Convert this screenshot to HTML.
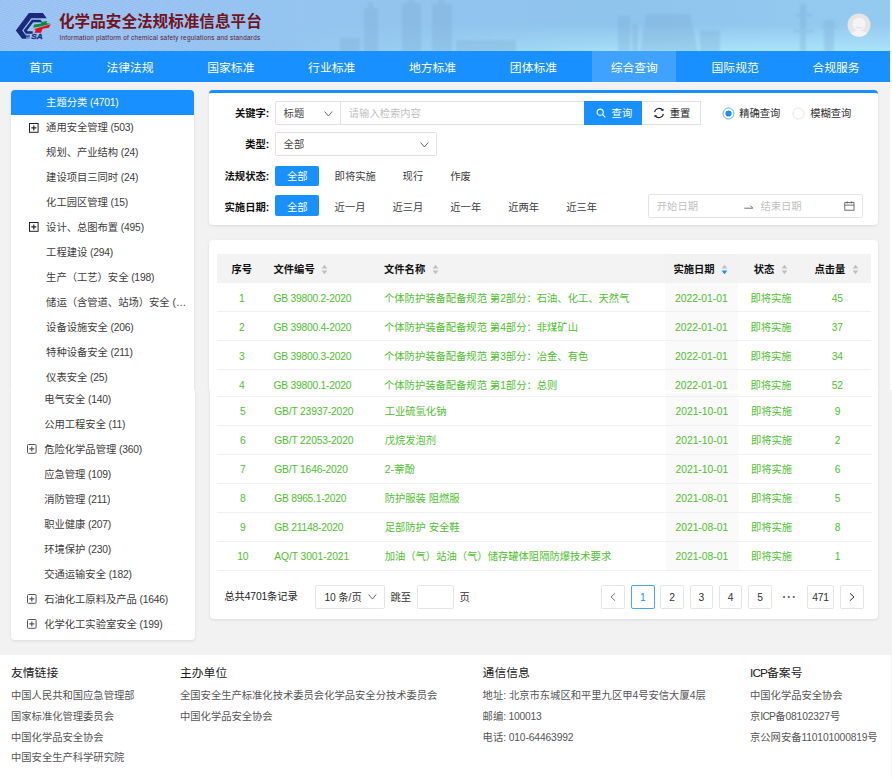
<!DOCTYPE html><html lang="zh-CN"><head><meta charset="utf-8"><title>化学品安全法规标准信息平台</title><style>
html,body{margin:0;padding:0;}
body{width:892px;height:778px;overflow:hidden;background:#f2f2f2;font-family:"Liberation Sans","Noto Sans CJK SC",sans-serif;position:relative;}
.t{position:absolute;white-space:nowrap;margin:0;padding:0;}
.r{position:absolute;box-sizing:border-box;}
svg{position:absolute;overflow:visible;}
</style></head><body>
<div class="r" style="left:0;top:0;width:892px;height:52px;background:linear-gradient(90deg,#a3cbf6 0%,#9fc9f4 18%,#95c5f0 32%,#92c4ee 45%,#8fc4ed 70%,#95caf0 100%);overflow:hidden;">
<div class="r" style="left:0;top:0;width:892px;height:52px;background:linear-gradient(180deg,rgba(160,210,245,0) 0%,rgba(168,222,248,0) 45%,rgba(176,232,250,0.85) 100%);-webkit-mask-image:linear-gradient(90deg,transparent 0%,transparent 30%,#000 75%,#000 100%);"></div>
<div class="r" style="left:0;top:0;width:300px;height:52px;background:repeating-linear-gradient(17deg,rgba(30,80,200,0) 0px,rgba(30,80,200,0.11) 1.05px,rgba(30,80,200,0) 2.1px);-webkit-mask-image:linear-gradient(90deg,#000 0%,#000 45%,transparent 100%);"></div>
<svg width="892" height="52" viewBox="0 0 892 52" style="left:0;top:0">
<defs><filter id="bl" x="-5%" y="-20%" width="110%" height="140%"><feGaussianBlur stdDeviation="1.1"/></filter></defs>
<g fill="#7aa9d3" opacity="0.30" filter="url(#bl)">
<rect x="364" y="8" width="14" height="44"/><rect x="368" y="2" width="5" height="8"/>
<rect x="402" y="3" width="19" height="49"/><rect x="408" y="0" width="6" height="4"/>
<rect x="432" y="4" width="20" height="48"/><rect x="438" y="0" width="7" height="5"/>
<rect x="340" y="38" width="20" height="14"/><rect x="456" y="40" width="60" height="12"/>
<path d="M640 52 L646 14 L690 14 L698 52 Z"/><rect x="618" y="16" width="12" height="36"/><rect x="632" y="24" width="6" height="28"/>
<rect x="700" y="30" width="20" height="22"/>
<rect x="800" y="4" width="6" height="48"/><rect x="796" y="14" width="16" height="2.5"/><rect x="794" y="30" width="20" height="2.5"/>
<rect x="824" y="20" width="10" height="32"/><rect x="820" y="26" width="18" height="2"/>
</g>
</svg>
</div>
<svg width="60" height="50" viewBox="0 0 60 50" style="left:0;top:0"><path d="M28.84 13.10 L42.94 13.10 L46.71 18.27 L31.31 18.27 L22.16 30.49 L25.18 34.53 L26.15 35.87 L26.15 38.67 L22.11 38.67 L15.81 30.49 Z" fill="#1b2a78"/><path d="M31.85 19.67 L40.46 19.67 L42.19 22.25 L33.25 22.25 L27.01 30.49 L27.55 31.19 L32.71 31.19 L32.71 33.66 L25.93 33.66 L23.56 30.49 Z" fill="#1b2a78"/><path d="M25.93 34.85 L29.81 34.85 L29.81 35.66 L25.93 35.66 Z" fill="#1b2a78" opacity="0.85"/><path d="M25.93 36.19 L29.81 36.19 L29.81 37.00 L25.93 37.00 Z" fill="#1b2a78" opacity="0.85"/><path d="M25.93 37.54 L29.81 37.54 L29.81 38.35 L25.93 38.35 Z" fill="#1b2a78" opacity="0.85"/><path d="M41.38 21.93 L47.24 21.07 L46.49 23.33 L50.47 23.87 L44.45 25.38 L39.33 26.72 L33.14 27.64 L34.22 24.62 L40.79 23.65 Z" fill="#0f8a3a"/><path d="M34.54 29.04 L42.29 26.67 L50.69 24.30 L48.86 27.85 L42.62 28.71 L41.00 32.70 L34.43 32.70 L36.16 29.57 L34.76 29.90 Z" fill="#e60a1c"/><text x="0" y="0" transform="translate(31.3 38.7) scale(1.13 1)" font-family='"Liberation Sans",sans-serif' font-size="7.3" stroke="#1b2a78" stroke-width="0.25" font-weight="700" font-style="italic" fill="#1b2a78">SA</text></svg>
<div class="t" style="top:11px;line-height:22px;font-size:15.6px;color:#75121d;font-weight:700;left:59.00px;">化学品安全法规标准信息平台</div>
<div class="t" style="top:33px;line-height:10px;font-size:6.4px;color:#5e2032;letter-spacing:0.245px;left:59.40px;">Information platform of chemical safety regulations and standards</div>
<svg width="24" height="24" viewBox="0 0 24 24" style="left:846.6px;top:13px">
<defs><clipPath id="avc"><circle cx="12" cy="12" r="11.5"/></clipPath></defs>
<circle cx="12" cy="12" r="11.5" fill="#e5e5e5"/>
<g clip-path="url(#avc)"><ellipse cx="12" cy="25" rx="10" ry="7.6" fill="#f4f4f4"/>
<circle cx="12" cy="11.2" r="6.5" fill="#f4f4f4"/>
<path d="M7.4 13.4 Q12 17.4 16.6 13.4 Q12 15.0 7.4 13.4Z" fill="#e1e1e1"/></g>
</svg>
<div class="r" style="left:0.00px;top:51.00px;width:892.00px;height:31.00px;background:#1890ff;"></div>
<div class="r" style="left:592.30px;top:51.00px;width:83.40px;height:31.00px;background:#3fa2ff;"></div>
<div class="t" style="top:58px;line-height:20px;font-size:11.8px;color:#fff;left:-159.00px;width:400px;text-align:center;">首页</div>
<div class="t" style="top:58px;line-height:20px;font-size:11.8px;color:#fff;left:-70.00px;width:400px;text-align:center;">法律法规</div>
<div class="t" style="top:58px;line-height:20px;font-size:11.8px;color:#fff;left:30.86px;width:400px;text-align:center;">国家标准</div>
<div class="t" style="top:58px;line-height:20px;font-size:11.8px;color:#fff;left:131.72px;width:400px;text-align:center;">行业标准</div>
<div class="t" style="top:58px;line-height:20px;font-size:11.8px;color:#fff;left:232.58px;width:400px;text-align:center;">地方标准</div>
<div class="t" style="top:58px;line-height:20px;font-size:11.8px;color:#fff;left:333.44px;width:400px;text-align:center;">团体标准</div>
<div class="t" style="top:58px;line-height:20px;font-size:11.8px;color:#fff;left:434.30px;width:400px;text-align:center;">综合查询</div>
<div class="t" style="top:58px;line-height:20px;font-size:11.8px;color:#fff;left:535.16px;width:400px;text-align:center;">国际规范</div>
<div class="t" style="top:58px;line-height:20px;font-size:11.8px;color:#fff;left:636.02px;width:400px;text-align:center;">合规服务</div>
<div class="r" style="left:11.00px;top:90.00px;width:183.00px;height:300.00px;background:#fff;border-radius:4px 4px 0 0;box-shadow:0 1px 3px rgba(0,0,0,0.10);clip-path:inset(-4px -4px 0 -4px);"></div>
<div class="r" style="left:11.20px;top:390.00px;width:183.80px;height:250.00px;background:#fff;border-radius:0 0 4px 4px;box-shadow:0 1px 3px rgba(0,0,0,0.10);clip-path:inset(0 -4px -5px -4px);"></div>
<div class="r" style="left:11.00px;top:90.00px;width:183.00px;height:25.00px;background:#1890ff;border-radius:4px 4px 0 0;"></div>
<div class="t" style="top:93px;line-height:20px;font-size:10.3px;color:#fff;left:46.10px;">主题分类<span style="letter-spacing:-0.198px"> (4701)</span></div>
<div class="t" style="top:118px;line-height:20px;font-size:10.3px;color:#3c3c3c;left:46.10px;">通用安全管理<span style="letter-spacing:-0.202px"> (503)</span></div>
<svg width="10" height="10" viewBox="0 0 10 10" style="left:28.80px;top:122.60px"><rect x="0.5" y="0.5" width="8.6" height="8.8" rx="0" fill="#fff" stroke="#222" stroke-width="1"/><path d="M2.3 4.9H7.3M4.8 2.4V7.4" stroke="#222" stroke-width="1.15" fill="none"/></svg>
<div class="t" style="top:143px;line-height:20px;font-size:10.3px;color:#3c3c3c;left:46.10px;">规划、产业结构<span style="letter-spacing:-0.207px"> (24)</span></div>
<div class="t" style="top:168px;line-height:20px;font-size:10.3px;color:#3c3c3c;left:46.10px;">建设项目三同时<span style="letter-spacing:-0.207px"> (24)</span></div>
<div class="t" style="top:193px;line-height:20px;font-size:10.3px;color:#3c3c3c;left:46.10px;">化工园区管理<span style="letter-spacing:-0.207px"> (15)</span></div>
<div class="t" style="top:218px;line-height:20px;font-size:10.3px;color:#3c3c3c;left:46.10px;">设计、总图布置<span style="letter-spacing:-0.202px"> (495)</span></div>
<svg width="10" height="10" viewBox="0 0 10 10" style="left:28.80px;top:222.48px"><rect x="0.5" y="0.5" width="8.6" height="8.8" rx="0" fill="#fff" stroke="#222" stroke-width="1"/><path d="M2.3 4.9H7.3M4.8 2.4V7.4" stroke="#222" stroke-width="1.15" fill="none"/></svg>
<div class="t" style="top:243px;line-height:20px;font-size:10.3px;color:#3c3c3c;left:46.10px;">工程建设<span style="letter-spacing:-0.202px"> (294)</span></div>
<div class="t" style="top:268px;line-height:20px;font-size:10.3px;color:#3c3c3c;left:46.10px;">生产（工艺）安全<span style="letter-spacing:-0.202px"> (198)</span></div>
<div class="t" style="top:293px;line-height:20px;font-size:10.3px;color:#3c3c3c;left:46.10px;">储运（含管道、站场）安全 (…</div>
<div class="t" style="top:318px;line-height:20px;font-size:10.3px;color:#3c3c3c;left:46.10px;">设备设施安全<span style="letter-spacing:-0.202px"> (206)</span></div>
<div class="t" style="top:343px;line-height:20px;font-size:10.3px;color:#3c3c3c;left:46.10px;">特种设备安全<span style="letter-spacing:-0.202px"> (211)</span></div>
<div class="t" style="top:368px;line-height:20px;font-size:10.3px;color:#3c3c3c;left:46.10px;">仪表安全<span style="letter-spacing:-0.207px"> (25)</span></div>
<div class="t" style="top:390px;line-height:20px;font-size:10.3px;color:#3c3c3c;left:44.20px;">电气安全<span style="letter-spacing:-0.202px"> (140)</span></div>
<div class="t" style="top:415px;line-height:20px;font-size:10.3px;color:#3c3c3c;left:44.20px;">公用工程安全<span style="letter-spacing:-0.207px"> (11)</span></div>
<div class="t" style="top:440px;line-height:20px;font-size:10.3px;color:#3c3c3c;left:44.20px;">危险化学品管理<span style="letter-spacing:-0.202px"> (360)</span></div>
<svg width="10" height="10" viewBox="0 0 10 10" style="left:27.00px;top:444.40px"><rect x="0.5" y="0.5" width="8.6" height="8.8" rx="1" fill="#fff" stroke="#555" stroke-width="1"/><path d="M2.3 4.9H7.3M4.8 2.4V7.4" stroke="#555" stroke-width="1.15" fill="none"/></svg>
<div class="t" style="top:465px;line-height:20px;font-size:10.3px;color:#3c3c3c;left:44.20px;">应急管理<span style="letter-spacing:-0.202px"> (109)</span></div>
<div class="t" style="top:490px;line-height:20px;font-size:10.3px;color:#3c3c3c;left:44.20px;">消防管理<span style="letter-spacing:-0.202px"> (211)</span></div>
<div class="t" style="top:515px;line-height:20px;font-size:10.3px;color:#3c3c3c;left:44.20px;">职业健康<span style="letter-spacing:-0.202px"> (207)</span></div>
<div class="t" style="top:540px;line-height:20px;font-size:10.3px;color:#3c3c3c;left:44.20px;">环境保护<span style="letter-spacing:-0.202px"> (230)</span></div>
<div class="t" style="top:565px;line-height:20px;font-size:10.3px;color:#3c3c3c;left:44.20px;">交通运输安全<span style="letter-spacing:-0.202px"> (182)</span></div>
<div class="t" style="top:590px;line-height:20px;font-size:10.3px;color:#3c3c3c;left:44.20px;">石油化工原料及产品<span style="letter-spacing:-0.198px"> (1646)</span></div>
<svg width="10" height="10" viewBox="0 0 10 10" style="left:27.00px;top:594.40px"><rect x="0.5" y="0.5" width="8.6" height="8.8" rx="1" fill="#fff" stroke="#555" stroke-width="1"/><path d="M2.3 4.9H7.3M4.8 2.4V7.4" stroke="#555" stroke-width="1.15" fill="none"/></svg>
<div class="t" style="top:615px;line-height:20px;font-size:10.3px;color:#3c3c3c;left:44.20px;">化学化工实验室安全<span style="letter-spacing:-0.202px"> (199)</span></div>
<svg width="10" height="10" viewBox="0 0 10 10" style="left:27.00px;top:619.40px"><rect x="0.5" y="0.5" width="8.6" height="8.8" rx="1" fill="#fff" stroke="#555" stroke-width="1"/><path d="M2.3 4.9H7.3M4.8 2.4V7.4" stroke="#555" stroke-width="1.15" fill="none"/></svg>
<div class="r" style="left:209.30px;top:90.00px;width:668.50px;height:134.70px;background:#fff;border-top:3px solid #1890ff;border-radius:4px;box-shadow:0 1px 3px rgba(0,0,0,0.10);"></div>
<div class="t" style="top:104px;line-height:20px;font-size:10.3px;color:#111;font-weight:700;left:-130.80px;width:400px;text-align:right;">关键字:</div>
<div class="t" style="top:135px;line-height:20px;font-size:10.3px;color:#111;font-weight:700;left:-130.80px;width:400px;text-align:right;">类型:</div>
<div class="t" style="top:167px;line-height:20px;font-size:10.3px;color:#111;font-weight:700;left:-130.80px;width:400px;text-align:right;">法规状态:</div>
<div class="t" style="top:198px;line-height:20px;font-size:10.3px;color:#111;font-weight:700;left:-130.80px;width:400px;text-align:right;">实施日期:</div>
<div class="r" style="left:275.00px;top:101.00px;width:310.00px;height:24.00px;background:#fff;border:1px solid #e1e1e1;border-radius:2px 0 0 2px;"></div>
<div class="r" style="left:340.00px;top:101.00px;width:1.00px;height:24.00px;background:#e1e1e1;"></div>
<div class="t" style="top:104px;line-height:20px;font-size:10.3px;color:#444;left:283.60px;">标题</div>
<svg width="9" height="6" viewBox="0 0 9 6" style="left:323.90px;top:110.50px"><path d="M0.6 0.5L4.4 5.0L8.2 0.5" stroke="#6a6a6a" stroke-width="1" fill="none"/></svg>
<div class="t" style="top:104px;line-height:20px;font-size:10.3px;color:#bfbfbf;left:348.80px;">请输入检索内容</div>
<div class="r" style="left:584.00px;top:101.00px;width:58.00px;height:24.00px;background:#1890ff;"></div>
<svg width="11" height="11" viewBox="0 0 11 11" style="left:595.6px;top:107.6px"><circle cx="4.2" cy="4.2" r="3.1" stroke="#fff" stroke-width="1.1" fill="none"/><path d="M6.5 6.5L9.4 9.4" stroke="#fff" stroke-width="1.2" fill="none"/></svg>
<div class="t" style="top:104px;line-height:20px;font-size:10.3px;color:#fff;left:611.60px;">查询</div>
<div class="r" style="left:642.00px;top:101.00px;width:59.00px;height:24.00px;background:#fff;border:1px solid #e1e1e1;border-left:none;"></div>
<svg width="12" height="12" viewBox="0 0 12 12" style="left:652.8px;top:107.0px"><path d="M9.9 3.4A4.6 4.6 0 0 0 1.6 5.2M2.1 8.6A4.6 4.6 0 0 0 10.4 6.8" stroke="#222" stroke-width="1.05" fill="none"/><path d="M10.6 1.6L10.3 4.1L7.9 3.6Z M1.4 10.4L1.7 7.9L4.1 8.4Z" fill="#222"/></svg>
<div class="t" style="top:104px;line-height:20px;font-size:10.3px;color:#222;left:669.80px;">重置</div>
<svg width="13" height="13" viewBox="0 0 13 13" style="left:721.6px;top:107.0px"><circle cx="6.5" cy="6.5" r="5.5" fill="#fff" stroke="#3a9dff" stroke-width="0.8"/><circle cx="6.5" cy="6.5" r="3.1" fill="#1890ff"/></svg>
<div class="t" style="top:104px;line-height:20px;font-size:10.3px;color:#333;left:739.20px;">精确查询</div>
<svg width="13" height="13" viewBox="0 0 13 13" style="left:791.7px;top:107.0px"><circle cx="6.5" cy="6.5" r="5.5" fill="#fff" stroke="#dcdcdc" stroke-width="0.8"/></svg>
<div class="t" style="top:104px;line-height:20px;font-size:10.3px;color:#333;left:810.20px;">模糊查询</div>
<div class="r" style="left:275.00px;top:132.00px;width:162.00px;height:24.00px;background:#fff;border:1px solid #e1e1e1;border-radius:2px;"></div>
<div class="t" style="top:135px;line-height:20px;font-size:10.3px;color:#444;left:283.60px;">全部</div>
<svg width="9" height="6" viewBox="0 0 9 6" style="left:419.80px;top:141.50px"><path d="M0.6 0.5L4.4 5.0L8.2 0.5" stroke="#6a6a6a" stroke-width="1" fill="none"/></svg>
<div class="r" style="left:275.20px;top:165.50px;width:44.10px;height:20.60px;background:#1890ff;border-radius:2px;"></div>
<div class="t" style="top:167px;line-height:20px;font-size:10.3px;color:#fff;left:97.20px;width:400px;text-align:center;">全部</div>
<div class="t" style="top:167px;line-height:20px;font-size:10.3px;color:#3c3c3c;left:334.60px;">即将实施</div>
<div class="t" style="top:167px;line-height:20px;font-size:10.3px;color:#3c3c3c;left:402.60px;">现行</div>
<div class="t" style="top:167px;line-height:20px;font-size:10.3px;color:#3c3c3c;left:450.30px;">作废</div>
<div class="r" style="left:275.20px;top:195.40px;width:44.10px;height:20.60px;background:#1890ff;border-radius:2px;"></div>
<div class="t" style="top:198px;line-height:20px;font-size:10.3px;color:#fff;left:97.20px;width:400px;text-align:center;">全部</div>
<div class="t" style="top:198px;line-height:20px;font-size:10.3px;color:#3c3c3c;left:334.60px;">近一月</div>
<div class="t" style="top:198px;line-height:20px;font-size:10.3px;color:#3c3c3c;left:392.40px;">近三月</div>
<div class="t" style="top:198px;line-height:20px;font-size:10.3px;color:#3c3c3c;left:450.30px;">近一年</div>
<div class="t" style="top:198px;line-height:20px;font-size:10.3px;color:#3c3c3c;left:508.20px;">近两年</div>
<div class="t" style="top:198px;line-height:20px;font-size:10.3px;color:#3c3c3c;left:566.20px;">近三年</div>
<div class="r" style="left:648.00px;top:194.00px;width:215.00px;height:24.00px;background:#fff;border:1px solid #e3e3e3;border-radius:2px;"></div>
<div class="t" style="top:197px;line-height:20px;font-size:10.3px;color:#bfbfbf;left:656.80px;">开始日期</div>
<div class="t" style="top:197px;line-height:20px;font-size:10.3px;color:#bfbfbf;left:760.40px;">结束日期</div>
<svg width="10" height="6" viewBox="0 0 10 6" style="left:744.2px;top:203.6px"><path d="M0.4 4.2H8.8L6.4 1.6" stroke="#666" stroke-width="0.95" fill="none"/></svg>
<svg width="11" height="10" viewBox="0 0 11 10" style="left:843.6px;top:201.2px"><rect x="0.8" y="1.6" width="9.2" height="7.6" stroke="#555" stroke-width="0.85" fill="none"/><path d="M0.8 4.1H10M3.2 0.4V2.4M7.6 0.4V2.4" stroke="#555" stroke-width="0.85" fill="none"/></svg>
<div class="r" style="left:209.30px;top:240.00px;width:668.30px;height:150.00px;background:#fff;border-radius:4px 4px 0 0;box-shadow:0 1px 3px rgba(0,0,0,0.10);clip-path:inset(-4px -4px 0 -4px);"></div>
<div class="r" style="left:210.00px;top:390.00px;width:668.40px;height:229.00px;background:#fff;border-radius:0 0 4px 4px;box-shadow:0 1px 3px rgba(0,0,0,0.10);clip-path:inset(0 -4px -5px -4px);"></div>
<div class="r" style="left:216.50px;top:254.00px;width:654.00px;height:28.95px;background:#f3f3f3;"></div>
<div class="r" style="left:665.00px;top:254.00px;width:73.40px;height:28.95px;background:#f2f2f2;"></div>
<div class="t" style="top:260px;line-height:20px;font-size:10.3px;color:#111;font-weight:700;left:41.80px;width:400px;text-align:center;">序号</div>
<div class="t" style="top:260px;line-height:20px;font-size:10.3px;color:#111;font-weight:700;left:273.50px;">文件编号</div>
<div class="t" style="top:260px;line-height:20px;font-size:10.3px;color:#111;font-weight:700;left:384.00px;">文件名称</div>
<div class="t" style="top:260px;line-height:20px;font-size:10.3px;color:#111;font-weight:700;left:673.40px;">实施日期</div>
<div class="t" style="top:260px;line-height:20px;font-size:10.3px;color:#111;font-weight:700;left:753.80px;">状态</div>
<div class="t" style="top:260px;line-height:20px;font-size:10.3px;color:#111;font-weight:700;left:814.40px;">点击量</div>
<svg width="7" height="11" viewBox="0 0 7 11" style="left:321.20px;top:263.70px"><path d="M3.5 0.7L6.4 4.4H0.6Z" fill="#bfbfbf"/><path d="M3.5 10.3L6.4 6.6H0.6Z" fill="#bfbfbf"/></svg>
<svg width="7" height="11" viewBox="0 0 7 11" style="left:431.60px;top:263.70px"><path d="M3.5 0.7L6.4 4.4H0.6Z" fill="#bfbfbf"/><path d="M3.5 10.3L6.4 6.6H0.6Z" fill="#bfbfbf"/></svg>
<svg width="7" height="11" viewBox="0 0 7 11" style="left:720.80px;top:263.70px"><path d="M3.5 0.7L6.4 4.4H0.6Z" fill="#bfbfbf"/><path d="M3.5 10.3L6.4 6.6H0.6Z" fill="#1890ff"/></svg>
<svg width="7" height="11" viewBox="0 0 7 11" style="left:780.60px;top:263.70px"><path d="M3.5 0.7L6.4 4.4H0.6Z" fill="#bfbfbf"/><path d="M3.5 10.3L6.4 6.6H0.6Z" fill="#bfbfbf"/></svg>
<svg width="7" height="11" viewBox="0 0 7 11" style="left:852.00px;top:263.70px"><path d="M3.5 0.7L6.4 4.4H0.6Z" fill="#bfbfbf"/><path d="M3.5 10.3L6.4 6.6H0.6Z" fill="#bfbfbf"/></svg>
<div class="r" style="left:665.00px;top:283.00px;width:73.40px;height:28.95px;background:#fafafa;"></div>
<div class="r" style="left:216.50px;top:311.05px;width:654.00px;height:0.90px;background:#f0f0f0;"></div>
<div class="t" style="top:289px;line-height:20px;font-size:10.3px;color:#4fbf2f;left:41.90px;width:400px;text-align:center;">1</div>
<div class="t" style="top:289px;line-height:20px;font-size:10.3px;color:#4fbf2f;left:273.50px;"><span style="letter-spacing:-0.243px">GB 39800.2-2020</span></div>
<div class="t" style="top:289px;line-height:20px;font-size:10.3px;color:#4fbf2f;left:384.00px;">个体防护装备配备规范 第2部分：石油、化工、天然气</div>
<div class="t" style="top:289px;line-height:20px;font-size:10.3px;color:#4fbf2f;left:501.30px;width:400px;text-align:center;"><span style="letter-spacing:-0.003px">2022-01-01</span></div>
<div class="t" style="top:289px;line-height:20px;font-size:10.3px;color:#4fbf2f;left:571.00px;width:400px;text-align:center;">即将实施</div>
<div class="t" style="top:289px;line-height:20px;font-size:10.3px;color:#4fbf2f;left:637.20px;width:400px;text-align:center;"><span style="letter-spacing:-0.176px">45</span></div>
<div class="r" style="left:665.00px;top:311.95px;width:73.40px;height:28.95px;background:#fafafa;"></div>
<div class="r" style="left:216.50px;top:340.00px;width:654.00px;height:0.90px;background:#f0f0f0;"></div>
<div class="t" style="top:318px;line-height:20px;font-size:10.3px;color:#4fbf2f;left:41.90px;width:400px;text-align:center;">2</div>
<div class="t" style="top:318px;line-height:20px;font-size:10.3px;color:#4fbf2f;left:273.50px;"><span style="letter-spacing:-0.243px">GB 39800.4-2020</span></div>
<div class="t" style="top:318px;line-height:20px;font-size:10.3px;color:#4fbf2f;left:384.00px;">个体防护装备配备规范 第4部分：非煤矿山</div>
<div class="t" style="top:318px;line-height:20px;font-size:10.3px;color:#4fbf2f;left:501.30px;width:400px;text-align:center;"><span style="letter-spacing:-0.003px">2022-01-01</span></div>
<div class="t" style="top:318px;line-height:20px;font-size:10.3px;color:#4fbf2f;left:571.00px;width:400px;text-align:center;">即将实施</div>
<div class="t" style="top:318px;line-height:20px;font-size:10.3px;color:#4fbf2f;left:637.20px;width:400px;text-align:center;"><span style="letter-spacing:-0.176px">37</span></div>
<div class="r" style="left:665.00px;top:340.90px;width:73.40px;height:28.95px;background:#fafafa;"></div>
<div class="r" style="left:216.50px;top:368.95px;width:654.00px;height:0.90px;background:#f0f0f0;"></div>
<div class="t" style="top:347px;line-height:20px;font-size:10.3px;color:#4fbf2f;left:41.90px;width:400px;text-align:center;">3</div>
<div class="t" style="top:347px;line-height:20px;font-size:10.3px;color:#4fbf2f;left:273.50px;"><span style="letter-spacing:-0.243px">GB 39800.3-2020</span></div>
<div class="t" style="top:347px;line-height:20px;font-size:10.3px;color:#4fbf2f;left:384.00px;">个体防护装备配备规范 第3部分：冶金、有色</div>
<div class="t" style="top:347px;line-height:20px;font-size:10.3px;color:#4fbf2f;left:501.30px;width:400px;text-align:center;"><span style="letter-spacing:-0.003px">2022-01-01</span></div>
<div class="t" style="top:347px;line-height:20px;font-size:10.3px;color:#4fbf2f;left:571.00px;width:400px;text-align:center;">即将实施</div>
<div class="t" style="top:347px;line-height:20px;font-size:10.3px;color:#4fbf2f;left:637.20px;width:400px;text-align:center;"><span style="letter-spacing:-0.176px">34</span></div>
<div class="r" style="left:665.00px;top:369.85px;width:73.40px;height:20.15px;background:#fafafa;"></div>
<div class="t" style="top:376px;line-height:20px;font-size:10.3px;color:#4fbf2f;left:41.90px;width:400px;text-align:center;">4</div>
<div class="t" style="top:376px;line-height:20px;font-size:10.3px;color:#4fbf2f;left:273.50px;"><span style="letter-spacing:-0.243px">GB 39800.1-2020</span></div>
<div class="t" style="top:376px;line-height:20px;font-size:10.3px;color:#4fbf2f;left:384.00px;">个体防护装备配备规范 第1部分：总则</div>
<div class="t" style="top:376px;line-height:20px;font-size:10.3px;color:#4fbf2f;left:501.30px;width:400px;text-align:center;"><span style="letter-spacing:-0.003px">2022-01-01</span></div>
<div class="t" style="top:376px;line-height:20px;font-size:10.3px;color:#4fbf2f;left:571.00px;width:400px;text-align:center;">即将实施</div>
<div class="t" style="top:376px;line-height:20px;font-size:10.3px;color:#4fbf2f;left:637.20px;width:400px;text-align:center;"><span style="letter-spacing:-0.176px">52</span></div>
<div class="r" style="left:665.50px;top:393.20px;width:73.40px;height:3.40px;background:#fafafa;"></div>
<div class="r" style="left:217.00px;top:396.20px;width:655.20px;height:0.90px;background:#f0f0f0;"></div>
<div class="r" style="left:665.50px;top:396.90px;width:73.40px;height:28.95px;background:#fafafa;"></div>
<div class="r" style="left:217.00px;top:424.95px;width:655.20px;height:0.90px;background:#f0f0f0;"></div>
<div class="t" style="top:402px;line-height:20px;font-size:10.3px;color:#4fbf2f;left:42.80px;width:400px;text-align:center;">5</div>
<div class="t" style="top:402px;line-height:20px;font-size:10.3px;color:#4fbf2f;left:274.20px;"><span style="letter-spacing:-0.173px">GB/T 23937-2020</span></div>
<div class="t" style="top:402px;line-height:20px;font-size:10.3px;color:#4fbf2f;left:384.70px;">工业硫氢化钠</div>
<div class="t" style="top:402px;line-height:20px;font-size:10.3px;color:#4fbf2f;left:501.80px;width:400px;text-align:center;"><span style="letter-spacing:-0.003px">2021-10-01</span></div>
<div class="t" style="top:402px;line-height:20px;font-size:10.3px;color:#4fbf2f;left:571.50px;width:400px;text-align:center;">即将实施</div>
<div class="t" style="top:402px;line-height:20px;font-size:10.3px;color:#4fbf2f;left:637.70px;width:400px;text-align:center;">9</div>
<div class="r" style="left:665.50px;top:425.85px;width:73.40px;height:28.95px;background:#fafafa;"></div>
<div class="r" style="left:217.00px;top:453.90px;width:655.20px;height:0.90px;background:#f0f0f0;"></div>
<div class="t" style="top:431px;line-height:20px;font-size:10.3px;color:#4fbf2f;left:42.80px;width:400px;text-align:center;">6</div>
<div class="t" style="top:431px;line-height:20px;font-size:10.3px;color:#4fbf2f;left:274.20px;"><span style="letter-spacing:-0.173px">GB/T 22053-2020</span></div>
<div class="t" style="top:431px;line-height:20px;font-size:10.3px;color:#4fbf2f;left:384.70px;">戊烷发泡剂</div>
<div class="t" style="top:431px;line-height:20px;font-size:10.3px;color:#4fbf2f;left:501.80px;width:400px;text-align:center;"><span style="letter-spacing:-0.003px">2021-10-01</span></div>
<div class="t" style="top:431px;line-height:20px;font-size:10.3px;color:#4fbf2f;left:571.50px;width:400px;text-align:center;">即将实施</div>
<div class="t" style="top:431px;line-height:20px;font-size:10.3px;color:#4fbf2f;left:637.70px;width:400px;text-align:center;">2</div>
<div class="r" style="left:665.50px;top:454.80px;width:73.40px;height:28.95px;background:#fafafa;"></div>
<div class="r" style="left:217.00px;top:482.85px;width:655.20px;height:0.90px;background:#f0f0f0;"></div>
<div class="t" style="top:460px;line-height:20px;font-size:10.3px;color:#4fbf2f;left:42.80px;width:400px;text-align:center;">7</div>
<div class="t" style="top:460px;line-height:20px;font-size:10.3px;color:#4fbf2f;left:274.20px;"><span style="letter-spacing:-0.173px">GB/T 1646-2020</span></div>
<div class="t" style="top:460px;line-height:20px;font-size:10.3px;color:#4fbf2f;left:384.70px;"><span style="letter-spacing:0.256px">2-</span>萘酚</div>
<div class="t" style="top:460px;line-height:20px;font-size:10.3px;color:#4fbf2f;left:501.80px;width:400px;text-align:center;"><span style="letter-spacing:-0.003px">2021-10-01</span></div>
<div class="t" style="top:460px;line-height:20px;font-size:10.3px;color:#4fbf2f;left:571.50px;width:400px;text-align:center;">即将实施</div>
<div class="t" style="top:460px;line-height:20px;font-size:10.3px;color:#4fbf2f;left:637.70px;width:400px;text-align:center;">6</div>
<div class="r" style="left:665.50px;top:483.75px;width:73.40px;height:28.95px;background:#fafafa;"></div>
<div class="r" style="left:217.00px;top:511.80px;width:655.20px;height:0.90px;background:#f0f0f0;"></div>
<div class="t" style="top:489px;line-height:20px;font-size:10.3px;color:#4fbf2f;left:42.80px;width:400px;text-align:center;">8</div>
<div class="t" style="top:489px;line-height:20px;font-size:10.3px;color:#4fbf2f;left:274.20px;"><span style="letter-spacing:-0.248px">GB 8965.1-2020</span></div>
<div class="t" style="top:489px;line-height:20px;font-size:10.3px;color:#4fbf2f;left:384.70px;">防护服装 阻燃服</div>
<div class="t" style="top:489px;line-height:20px;font-size:10.3px;color:#4fbf2f;left:501.80px;width:400px;text-align:center;"><span style="letter-spacing:-0.003px">2021-08-01</span></div>
<div class="t" style="top:489px;line-height:20px;font-size:10.3px;color:#4fbf2f;left:571.50px;width:400px;text-align:center;">即将实施</div>
<div class="t" style="top:489px;line-height:20px;font-size:10.3px;color:#4fbf2f;left:637.70px;width:400px;text-align:center;">5</div>
<div class="r" style="left:665.50px;top:512.70px;width:73.40px;height:28.95px;background:#fafafa;"></div>
<div class="r" style="left:217.00px;top:540.75px;width:655.20px;height:0.90px;background:#f0f0f0;"></div>
<div class="t" style="top:518px;line-height:20px;font-size:10.3px;color:#4fbf2f;left:42.80px;width:400px;text-align:center;">9</div>
<div class="t" style="top:518px;line-height:20px;font-size:10.3px;color:#4fbf2f;left:274.20px;"><span style="letter-spacing:-0.219px">GB 21148-2020</span></div>
<div class="t" style="top:518px;line-height:20px;font-size:10.3px;color:#4fbf2f;left:384.70px;">足部防护 安全鞋</div>
<div class="t" style="top:518px;line-height:20px;font-size:10.3px;color:#4fbf2f;left:501.80px;width:400px;text-align:center;"><span style="letter-spacing:-0.003px">2021-08-01</span></div>
<div class="t" style="top:518px;line-height:20px;font-size:10.3px;color:#4fbf2f;left:571.50px;width:400px;text-align:center;">即将实施</div>
<div class="t" style="top:518px;line-height:20px;font-size:10.3px;color:#4fbf2f;left:637.70px;width:400px;text-align:center;">8</div>
<div class="r" style="left:665.50px;top:541.65px;width:73.40px;height:28.95px;background:#fafafa;"></div>
<div class="r" style="left:217.00px;top:569.70px;width:655.20px;height:0.90px;background:#f0f0f0;"></div>
<div class="t" style="top:547px;line-height:20px;font-size:10.3px;color:#4fbf2f;left:42.80px;width:400px;text-align:center;"><span style="letter-spacing:-0.176px">10</span></div>
<div class="t" style="top:547px;line-height:20px;font-size:10.3px;color:#4fbf2f;left:274.20px;"><span style="letter-spacing:-0.070px">AQ/T 3001-2021</span></div>
<div class="t" style="top:547px;line-height:20px;font-size:10.3px;color:#4fbf2f;left:384.70px;">加油（气）站油（气）储存罐体阻隔防爆技术要求</div>
<div class="t" style="top:547px;line-height:20px;font-size:10.3px;color:#4fbf2f;left:501.80px;width:400px;text-align:center;"><span style="letter-spacing:-0.003px">2021-08-01</span></div>
<div class="t" style="top:547px;line-height:20px;font-size:10.3px;color:#4fbf2f;left:571.50px;width:400px;text-align:center;">即将实施</div>
<div class="t" style="top:547px;line-height:20px;font-size:10.3px;color:#4fbf2f;left:637.70px;width:400px;text-align:center;">1</div>
<div class="t" style="top:587px;line-height:20px;font-size:10.3px;color:#222;left:224.20px;">总共<span style="letter-spacing:-0.176px">4701</span>条记录</div>
<div class="r" style="left:315.00px;top:585.00px;width:70.00px;height:24.00px;background:#fff;border:1px solid #e4e4e4;border-radius:2px;"></div>
<div class="t" style="top:588px;line-height:20px;font-size:10.3px;color:#333;left:324.40px;"><span style="letter-spacing:-0.131px">10 </span>条/页</div>
<svg width="9" height="6" viewBox="0 0 9 6" style="left:368.20px;top:593.90px"><path d="M0.6 0.5L4.4 5.0L8.2 0.5" stroke="#6a6a6a" stroke-width="1" fill="none"/></svg>
<div class="t" style="top:588px;line-height:20px;font-size:10.3px;color:#333;left:390.40px;">跳至</div>
<div class="r" style="left:417.00px;top:585.00px;width:37.00px;height:24.00px;background:#fff;border:1px solid #e4e4e4;border-radius:2px;"></div>
<div class="t" style="top:588px;line-height:20px;font-size:10.3px;color:#333;left:459.60px;">页</div>
<div class="r" style="left:601.30px;top:585.00px;width:23.60px;height:24.00px;background:#fff;border:1px solid #e4e4e4;border-radius:2px;"></div>
<svg width="6" height="8" viewBox="0 0 6 8" style="left:610.2px;top:592.8px"><path d="M5.0 0.3L1.0 4L5.0 7.7" stroke="#777" stroke-width="1" fill="none"/></svg>
<div class="r" style="left:631.00px;top:585.00px;width:23.60px;height:24.00px;background:#fff;border:1px solid #45a4ff;border-radius:2px;"></div>
<div class="t" style="top:588px;line-height:20px;font-size:10.3px;color:#1890ff;left:442.80px;width:400px;text-align:center;">1</div>
<div class="r" style="left:660.20px;top:585.00px;width:23.60px;height:24.00px;background:#fff;border:1px solid #e4e4e4;border-radius:2px;"></div>
<div class="t" style="top:588px;line-height:20px;font-size:10.3px;color:#333;left:472.00px;width:400px;text-align:center;">2</div>
<div class="r" style="left:689.50px;top:585.00px;width:23.60px;height:24.00px;background:#fff;border:1px solid #e4e4e4;border-radius:2px;"></div>
<div class="t" style="top:588px;line-height:20px;font-size:10.3px;color:#333;left:501.30px;width:400px;text-align:center;">3</div>
<div class="r" style="left:718.90px;top:585.00px;width:23.60px;height:24.00px;background:#fff;border:1px solid #e4e4e4;border-radius:2px;"></div>
<div class="t" style="top:588px;line-height:20px;font-size:10.3px;color:#333;left:530.70px;width:400px;text-align:center;">4</div>
<div class="r" style="left:748.20px;top:585.00px;width:23.60px;height:24.00px;background:#fff;border:1px solid #e4e4e4;border-radius:2px;"></div>
<div class="t" style="top:588px;line-height:20px;font-size:10.3px;color:#333;left:560.00px;width:400px;text-align:center;">5</div>
<div class="t" style="top:587px;line-height:20px;font-size:7.0px;color:#555;letter-spacing:2.4px;left:590.00px;width:400px;text-align:center;">•••</div>
<div class="r" style="left:807.00px;top:585.00px;width:27.10px;height:24.00px;background:#fff;border:1px solid #e4e4e4;border-radius:2px;"></div>
<div class="t" style="top:588px;line-height:20px;font-size:10.3px;color:#333;left:620.55px;width:400px;text-align:center;"><span style="letter-spacing:-0.176px">471</span></div>
<div class="r" style="left:840.20px;top:585.00px;width:23.60px;height:24.00px;background:#fff;border:1px solid #e4e4e4;border-radius:2px;"></div>
<svg width="6" height="8" viewBox="0 0 6 8" style="left:849.2px;top:592.8px"><path d="M1.0 0.3L5.0 4L1.0 7.7" stroke="#333" stroke-width="1" fill="none"/></svg>
<div class="r" style="left:890.00px;top:0.00px;width:2.00px;height:390.00px;background:#fff;"></div>
<div class="r" style="left:0.00px;top:655.00px;width:891.00px;height:123.00px;background:#fff;"></div>
<div class="t" style="top:663px;line-height:20px;font-size:11.8px;color:#1a1a1a;left:11.00px;">友情链接</div>
<div class="t" style="top:663px;line-height:20px;font-size:11.8px;color:#1a1a1a;left:180.00px;">主办单位</div>
<div class="t" style="top:663px;line-height:20px;font-size:11.8px;color:#1a1a1a;left:482.60px;">通信信息</div>
<div class="t" style="top:663px;line-height:20px;font-size:11.8px;color:#1a1a1a;left:750.00px;"><span style="letter-spacing:-0.872px">ICP</span>备案号</div>
<div class="t" style="top:686px;line-height:20px;font-size:10.3px;color:#555;left:11.00px;">中国人民共和国应急管理部</div>
<div class="t" style="top:707px;line-height:20px;font-size:10.3px;color:#555;left:11.00px;">国家标准化管理委员会</div>
<div class="t" style="top:728px;line-height:20px;font-size:10.3px;color:#555;left:11.00px;">中国化学品安全协会</div>
<div class="t" style="top:748px;line-height:20px;font-size:10.3px;color:#555;left:11.00px;">中国安全生产科学研究院</div>
<div class="t" style="top:686px;line-height:20px;font-size:10.3px;color:#555;left:180.00px;">全国安全生产标准化技术委员会化学品安全分技术委员会</div>
<div class="t" style="top:707px;line-height:20px;font-size:10.3px;color:#555;left:180.00px;">中国化学品安全协会</div>
<div class="t" style="top:686px;line-height:20px;font-size:10.3px;color:#555;left:482.60px;">地址: 北京市东城区和平里九区甲4号安信大厦4层</div>
<div class="t" style="top:707px;line-height:20px;font-size:10.3px;color:#555;left:482.60px;">邮编<span style="letter-spacing:-0.216px">: 100013</span></div>
<div class="t" style="top:728px;line-height:20px;font-size:10.3px;color:#555;left:482.60px;">电话<span style="letter-spacing:-0.137px">: 010-64463992</span></div>
<div class="t" style="top:686px;line-height:20px;font-size:10.3px;color:#555;left:750.00px;">中国化学品安全协会</div>
<div class="t" style="top:707px;line-height:20px;font-size:10.3px;color:#555;left:750.00px;">京<span style="letter-spacing:-0.761px">ICP</span>备<span style="letter-spacing:-0.176px">08102327</span>号</div>
<div class="t" style="top:728px;line-height:20px;font-size:10.3px;color:#555;left:750.00px;">京公网安备<span style="letter-spacing:-0.176px">110101000819</span>号</div>
</body></html>
